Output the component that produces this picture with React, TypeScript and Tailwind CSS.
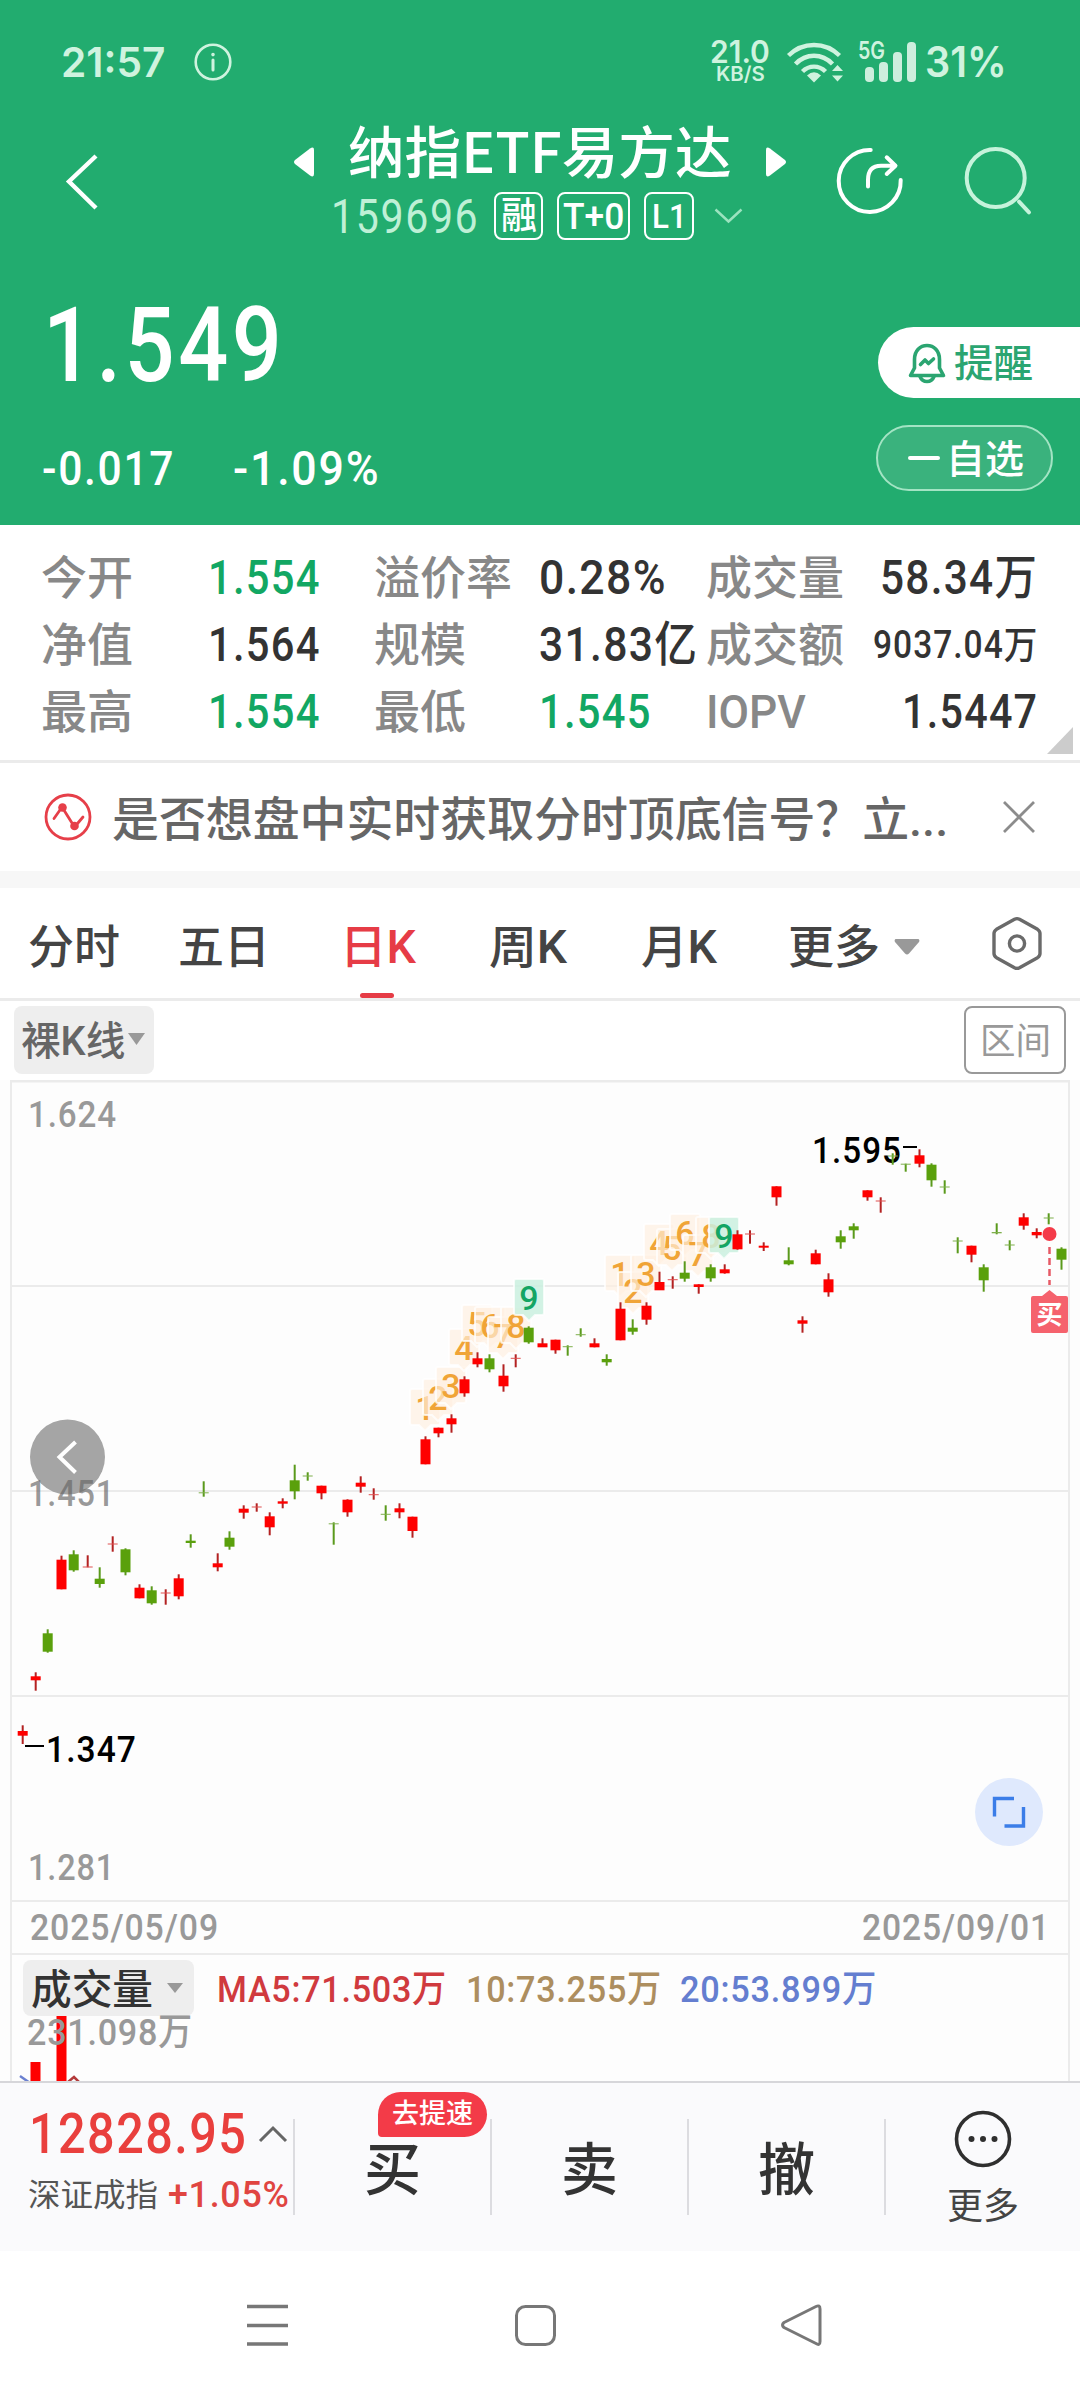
import { useLayoutEffect, useRef, useState, type ReactNode } from "react";

/* Text squeezed or stretched horizontally so that it fills a fixed width. */
function Fit({ w, className = "", children }: { w: number; className?: string; children: ReactNode }) {
  const ref = useRef<HTMLSpanElement>(null);
  const [scale, setScale] = useState(1);
  useLayoutEffect(() => {
    if (ref.current) setScale(w / ref.current.offsetWidth);
  }, [w]);
  return (
    <span className={`block shrink-0 leading-none ${className}`} style={{ width: w }}>
      <span ref={ref} className="inline-block origin-left whitespace-nowrap" style={{ transform: `scaleX(${scale})` }}>
        {children}
      </span>
    </span>
  );
}

function StatusBar() {
  return (
    <div className="flex h-[124px] items-center pl-[61px] font-['Inter','Noto_Sans_CJK_SC',sans-serif] font-semibold text-[#cff3df]">
      <Fit w={104} className="text-[41px]">21:57</Fit>
      <svg className="ml-7 shrink-0" width="40" height="40" viewBox="0 0 40 40" fill="none" stroke="#cff3df" strokeWidth="2.6" strokeLinecap="round">
        <circle cx="20" cy="20" r="17.3" />
        <path d="M20 18v10" strokeWidth="3" />
        <circle cx="20" cy="12.6" r="0.8" strokeWidth="2" />
      </svg>
      <div className="mb-1 ml-[477px] flex w-[60px] flex-col items-center">
        <Fit w={60} className="text-[31px]">21.0</Fit>
        <Fit w={49} className="-mt-[3px] text-[20px]">KB/S</Fit>
      </div>
      <svg className="ml-4 shrink-0" width="58" height="44" viewBox="0 0 58 44" fill="none" stroke="#cff3df" strokeWidth="4.4">
        <path d="M2.5 15.500C17 1.500 39 1.500 53.500 15.500M9.500 24C20 13 36 13 46.500 24M16.500 31.500C23 25 33 25 39.500 31.500" />
        <path d="M21 35.500Q28 29 35 35.500L28 42.500Z" fill="#cff3df" stroke="none" />
        <path d="M51.500 25L46 31H57ZM46 35.500H57L51.500 41.500Z" fill="#cff3df" stroke="none" />
      </svg>
      <div className="relative ml-[15px] flex h-10 w-[58px] shrink-0 items-end gap-[5px] pl-[6px]">
        <Fit w={27} className="absolute -top-[3px] -left-px text-[24px]">5G</Fit>
        <span className="h-[15px] w-[9px] rounded-sm bg-[#cdeedd]" />
        <span className="h-5 w-[9px] rounded-sm bg-[#cdeedd]" />
        <span className="h-[30px] w-[9px] rounded-sm bg-[#cdeedd]" />
        <span className="h-10 w-[9px] rounded-sm bg-[#cdeedd]" />
      </div>
      <Fit w={82} className="ml-[8px] text-[42px]">31%</Fit>
    </div>
  );
}

function TitleBar() {
  return (
    <div className="flex h-[126px] items-start">
      <svg className="mt-[27px] ml-[62px] shrink-0" width="40" height="60" viewBox="0 0 40 60" fill="none" stroke="white" strokeWidth="4.400">
        <path d="M34 5L7 30.500L34 57" />
      </svg>
      <div className="ml-[188px] w-[500px] shrink-0">
        <div className="flex h-[50px] items-start">
          <svg className="mt-[23px] ml-[3px] shrink-0" width="22" height="30" viewBox="0 0 22 30" fill="white">
            <path d="M17 1.500Q21 -1 21 3V27Q21 31 17 28.500L2 17Q0 15 2 13Z" />
          </svg>
          <Fit w={384} className="-mt-[3px] ml-[33px] font-['Noto_Sans_CJK_SC',sans-serif] text-[56px] font-medium leading-[50px] text-white">纳指ETF易方达</Fit>
          <svg className="mt-[23px] ml-[33px] shrink-0" width="22" height="30" viewBox="0 0 22 30" fill="white">
            <path d="M5 1.500Q1 -1 1 3V27Q1 31 5 28.500L20 17Q22 15 20 13Z" />
          </svg>
        </div>
        <div className="mt-[18px] flex h-12 items-center">
          <Fit w={148} className="mt-[2px] ml-[41px] text-[48px] font-normal tracking-[0.04em] text-[#bff0d6]">159696</Fit>
          <div className="ml-[15px] flex h-12 w-[49px] shrink-0 items-center justify-center rounded-lg border-2 border-white text-white">
            <Fit w={36} className="text-[37px] font-medium">融</Fit>
          </div>
          <div className="ml-[14px] flex h-12 w-[73px] shrink-0 items-center justify-center rounded-lg border-2 border-white text-white">
            <Fit w={61} className="mt-[2px] text-[36px] font-medium">T+0</Fit>
          </div>
          <div className="ml-[14px] flex h-12 w-[50px] shrink-0 items-center justify-center rounded-lg border-2 border-white text-white">
            <Fit w={35} className="text-[34px]">L1</Fit>
          </div>
          <svg className="ml-[20px] shrink-0" width="29" height="16" viewBox="0 0 29 16" fill="none" stroke="#9be3bf" strokeWidth="2.4">
            <path d="M1.500 1.500L14.500 13.500L27.500 1.500" />
          </svg>
        </div>
      </div>
      <svg className="mt-[21px] ml-[43px] shrink-0" width="72" height="72" viewBox="0 0 72 72" fill="none" stroke="white" strokeWidth="4" strokeLinecap="round" strokeLinejoin="round">
        <path d="M37.700 5A31 31 0 1 0 67.700 35" />
        <path d="M35 41.500V35Q35 20.700 48 20.700H62M53.700 12.300L62.500 20.700L53.700 29" />
      </svg>
      <svg className="mt-[21px] ml-[55px] shrink-0" width="72" height="72" viewBox="0 0 72 72" fill="none" stroke="#c6f3db" strokeWidth="4" strokeLinecap="round">
        <circle cx="35.700" cy="33" r="29" />
        <path d="M59 56.700L69 67.300" />
      </svg>
    </div>
  );
}

function PricePanel() {
  return (
    <div className="flex h-[275px] justify-between text-white">
      <div className="pt-[44px] pl-[43px]">
        <Fit w={242} className="text-[103px] font-medium leading-[108px] tracking-[0.04em]">1.549</Fit>
        <div className="mt-[48px] flex items-center text-[48px] font-medium leading-[48px] tracking-[0.04em]">
          <Fit w={133} className="-ml-px">-0.017</Fit>
          <Fit w={147} className="ml-[58px]">-1.09%</Fit>
        </div>
      </div>
      <div className="flex w-[204px] flex-col items-start pt-[77px]">
        <div className="ml-[2px] flex h-[71px] w-[202px] items-center rounded-l-full bg-white pl-[30px] text-[#2ba571]">
          <svg width="38" height="42" viewBox="0 0 38 42" fill="none" stroke="#2ba571" strokeWidth="3.600" strokeLinecap="round" strokeLinejoin="round">
            <path d="M6.500 26V17.500C6.500 9 12 3.500 19 3.500S31.500 9 31.500 17.500V26L35.500 33.500H2.500Z" />
            <path d="M12 34.500Q14 39.500 19 39.500T26 34.500" />
            <path d="M12.500 22.500L17 18L20.500 21.500L25.500 17" />
          </svg>
          <Fit w={79} className="mt-[4px] ml-[8px] text-[39px] font-medium">提醒</Fit>
        </div>
        <div className="mt-[27px] flex h-[66px] w-[177px] items-center rounded-full border-2 border-[#a3e4c4] bg-[#3ab27d] pl-[30px]">
          <span className="h-[4px] w-8 rounded-full bg-white" />
          <Fit w={78} className="mt-[4px] ml-[6px] text-[39px] font-medium">自选</Fit>
        </div>
      </div>
    </div>
  );
}

const GREEN = "text-[#12a763]";
const DARK = "text-[#333333]";

const STATS: { label: string; lw: number; value: string; vw: number; color: string; small?: boolean }[][] = [
  [
    { label: "今开", lw: 92, value: "1.554", vw: 113, color: GREEN },
    { label: "净值", lw: 92, value: "1.564", vw: 113, color: DARK },
    { label: "最高", lw: 92, value: "1.554", vw: 113, color: GREEN },
  ],
  [
    { label: "溢价率", lw: 138, value: "0.28%", vw: 128, color: DARK },
    { label: "规模", lw: 92, value: "31.83亿", vw: 159, color: DARK },
    { label: "最低", lw: 92, value: "1.545", vw: 113, color: GREEN },
  ],
  [
    { label: "成交量", lw: 138, value: "58.34万", vw: 158, color: DARK },
    { label: "成交额", lw: 138, value: "9037.04万", vw: 165, color: DARK, small: true },
    { label: "IOPV", lw: 100, value: "1.5447", vw: 136, color: DARK },
  ],
];

function Stats() {
  return (
    <div className="relative flex h-[238px] border-b-[3px] border-[#ebebeb] bg-white pt-[19px]">
      {STATS.map((col, i) => (
        <div key={i} className={i === 0 ? "ml-[41px] w-[280px]" : i === 1 ? "ml-[53px] w-[324px]" : "ml-[8px] w-[332px]"}>
          {col.map((s) => (
            <div key={s.label} className="flex h-[67px] items-center">
              <div className={i === 1 ? "w-[165px] shrink-0" : ""}>
                <Fit w={s.lw} className="text-[46px] text-[#888888]">{s.label}</Fit>
              </div>
              <div className={i === 1 ? "" : "ml-auto"}>
                <Fit w={s.vw} className={`tracking-[0.03em] ${s.small ? "text-[38px]" : "text-[48px]"} ${s.color}`}>{s.value}</Fit>
              </div>
            </div>
          ))}
        </div>
      ))}
      <svg className="absolute right-[7px] bottom-[6px]" width="26" height="27" viewBox="0 0 26 27" fill="#cccccc">
        <path d="M26 0V27H0Z" />
      </svg>
    </div>
  );
}

function Notice() {
  return (
    <div className="flex h-[108px] items-center bg-white pl-[44px] text-[#666666]">
      <svg className="shrink-0" width="48" height="48" viewBox="0 0 48 48" fill="none" stroke="#e63f49" strokeWidth="2.800" strokeLinecap="round">
        <circle cx="24" cy="24" r="22" />
        <circle cx="18.500" cy="14.500" r="4.300" fill="#e63f49" stroke="none" />
        <circle cx="30.500" cy="33" r="4.300" fill="#e63f49" stroke="none" />
        <path d="M10 25.500L16 17M20.500 18L28 30M33.500 30.500L39 24" />
      </svg>
      <Fit w={836} className="mt-[5px] ml-[20px] text-[47px] leading-[54px]">是否想盘中实时获取分时顶底信号？立...</Fit>
      <svg className="ml-[54px] shrink-0" width="34" height="34" viewBox="0 0 34 34" stroke="#8c8c8c" strokeWidth="2.800">
        <path d="M2 2L32 32M32 2L2 32" />
      </svg>
    </div>
  );
}

function Tabs() {
  return (
    <div className="flex h-[113px] items-center border-b-[3px] border-[#ebebeb] bg-white pt-2 pl-[28px] text-[46px] text-[#444444]">
      <Fit w={92}>分时</Fit>
      <Fit w={92} className="ml-[58px]">五日</Fit>
      <div className="relative ml-[70px] flex h-full w-[80px] items-center text-[#e63c46]">
        <Fit w={76}>日K</Fit>
        <span className="absolute bottom-0 left-[20px] h-[5px] w-[34px] rounded-full bg-[#e63c46]" />
      </div>
      <Fit w={78} className="ml-[69px]">周K</Fit>
      <Fit w={76} className="ml-[74px]">月K</Fit>
      <Fit w={92} className="ml-[71px]">更多</Fit>
      <svg className="ml-[14px] shrink-0" width="26" height="16" viewBox="0 0 26 16" fill="#999999">
        <path d="M1.500 0H24.500Q26 1 25 3L15 14.500Q13 16.500 11 14.500L1 3Q0 1 1.500 0Z" />
      </svg>
      <svg className="-mt-[7px] ml-[71px] shrink-0" width="52" height="56" viewBox="0 0 52 56" fill="none" stroke="#6a6a6a" strokeWidth="3.400" strokeLinejoin="round">
        <path d="M23.500 3.300Q26 2 28.500 3.300L46.500 13.300Q49 15 49 17.500V37.500Q49 40 46.500 41.700L28.500 51.700Q26 53 23.500 51.700L5.500 41.700Q3 40 3 37.500V17.500Q3 15 5.500 13.300Z" />
        <circle cx="26" cy="27.500" r="7.600" />
      </svg>
    </div>
  );
}

function ChartTools() {
  return (
    <div className="flex h-[79px] items-start justify-between bg-white pt-[5px] pr-[14px] pl-[14px]">
      <div className="flex h-[68px] w-[140px] items-center rounded-lg bg-[#eeeeee] pl-[7px] text-[#666666]">
        <Fit w={104} className="mt-[3px] text-[40px]">裸K线</Fit>
        <svg className="-mt-[3px] ml-[3px] shrink-0" width="17" height="12" viewBox="0 0 17 12" fill="#999999">
          <path d="M0 0H17L8.500 12Z" />
        </svg>
      </div>
      <div className="flex h-[68px] w-[102px] items-center justify-center rounded-lg border-2 border-[#999999] text-[#999999]">
        <Fit w={71} className="mt-[4px] text-[36px] font-normal">区间</Fit>
      </div>
    </div>
  );
}

/* One entry per trading day: centre x, high, low, body top, body bottom, rising (1) or falling (0). */
const CANDLES: [number, number, number, number, number, 0 | 1][] = [
  [22.7, 1725.3, 1744, 1731, 1735.7, 1], [35.7, 1672.3, 1690.7, 1676.3, 1680.3, 1], [47.700, 1629.3, 1652.7, 1633.3, 1651.7, 0],
  [61.500, 1555.7, 1589.3, 1559.7, 1589.3, 1], [73.700, 1550.3, 1571.7, 1554.3, 1570.3, 0], [87.700, 1555.3, 1567.3, 1566.500, 1567.500, 1],
  [99.700, 1567.3, 1587.7, 1578.7, 1584, 0], [112.700, 1536.3, 1551.7, 1543.500, 1544.500, 1], [125.500, 1548.3, 1575.3, 1549.3, 1572.3, 0],
  [139.500, 1584.3, 1598.3, 1587.7, 1598.3, 1], [151.700, 1586.3, 1604.7, 1590.3, 1603.3, 0], [165.700, 1589.3, 1604.7, 1592.500, 1593.500, 1],
  [178.700, 1574.3, 1599.3, 1578.3, 1596.3, 1], [190.700, 1534.3, 1547.7, 1540.7, 1543, 0], [203.700, 1481.3, 1496.7, 1492.3, 1493.3, 0],
  [217.700, 1553.3, 1571.3, 1563.3, 1567.3, 1], [229.500, 1531.3, 1549.7, 1537.7, 1546.7, 0], [243.700, 1505.3, 1518.7, 1508.7, 1512.7, 1],
  [256.700, 1503.3, 1511.7, 1506.500, 1507.500, 1], [269.700, 1512.3, 1535.3, 1516.3, 1527.3, 1], [282.700, 1498.3, 1508.3, 1501.3, 1503.7, 1],
  [294.700, 1464.7, 1499.3, 1480.3, 1491.3, 0], [307.700, 1472.3, 1480.7, 1475.500, 1476.500, 0], [321.500, 1485.7, 1499.3, 1485.7, 1493.3, 1],
  [333.700, 1522.3, 1544.7, 1523.3, 1524.3, 0], [347.500, 1499.3, 1516.7, 1499.7, 1512.3, 1], [360.700, 1476.3, 1492.7, 1482.7, 1486.7, 1],
  [373.700, 1488.3, 1499.7, 1494.2, 1495.2, 1], [385.700, 1505.3, 1520.7, 1513.8, 1514.8, 0], [399.500, 1503.3, 1518.3, 1508.3, 1512.3, 1],
  [412.500, 1516.7, 1537.7, 1516.7, 1531, 1], [425.500, 1436.3, 1464.3, 1439.3, 1464.3, 1], [438.500, 1427.7, 1437.3, 1427.7, 1433.3, 1],
  [451.500, 1414.3, 1432.7, 1418.3, 1424.3, 1], [464.500, 1376.3, 1396.7, 1379.3, 1393.3, 1], [477.500, 1352.3, 1367.3, 1358.3, 1364.3, 1],
  [489.500, 1354.3, 1372.3, 1358.3, 1369.3, 0], [503.500, 1364.3, 1391.7, 1375.7, 1386.3, 1], [515.700, 1354.3, 1367.3, 1357.8, 1358.8, 1],
  [528.700, 1326.3, 1343.7, 1327.7, 1342.3, 0], [542.500, 1338.3, 1347, 1343.3, 1347.3, 1], [555.500, 1339.7, 1353.7, 1339.7, 1350.3, 1],
  [567.700, 1345.3, 1355.7, 1346.2, 1347.2, 0], [580.700, 1328.3, 1336.7, 1334.2, 1335.2, 0], [594.500, 1338.3, 1347.3, 1343.3, 1347.3, 1],
  [606.700, 1354.3, 1365.7, 1359, 1362.3, 0], [620.500, 1302.3, 1340.3, 1308.7, 1340.3, 1], [632.700, 1319.3, 1334.7, 1327.7, 1331.7, 0],
  [646.500, 1302.3, 1324.7, 1305.7, 1319.7, 1], [659.500, 1271.7, 1290, 1282, 1290.3, 1], [672.700, 1276.3, 1288.7, 1279.2, 1280.2, 1],
  [684.700, 1261.3, 1281.7, 1272.7, 1278.7, 0], [698.700, 1284.3, 1293.7, 1284.3, 1287, 1], [710.700, 1264.3, 1281.7, 1267.3, 1278.3, 0],
  [724.700, 1264.3, 1273.7, 1269.3, 1273.3, 1], [737.500, 1230.3, 1249.7, 1234.3, 1249.3, 1], [750, 1230.3, 1243.7, 1233.500, 1234.500, 1],
  [763.700, 1242.3, 1251, 1245.7, 1247.7, 1], [776.500, 1186.3, 1205.7, 1186.3, 1197.3, 1], [788.700, 1247.3, 1265.3, 1260.3, 1264.3, 0],
  [802.500, 1316.3, 1332.7, 1320.3, 1323.7, 1], [815.700, 1249.7, 1264.3, 1253.3, 1264.3, 1], [828.500, 1273.3, 1296.7, 1279.3, 1292.3, 1],
  [840.700, 1230.3, 1248.7, 1236.3, 1242.3, 0], [853.700, 1223.3, 1238.7, 1226.3, 1230.3, 0], [867.500, 1190.3, 1200.7, 1190.3, 1197.3, 1],
  [880.700, 1197.3, 1212.7, 1200.500, 1201.500, 1], [892.700, 1153.3, 1164.7, 1155.500, 1156.500, 0], [905.700, 1163.7, 1171.7, 1163.700, 1164.700, 0],
  [919.500, 1149.3, 1167.3, 1155.3, 1163.7, 1], [931.500, 1163.3, 1186.7, 1164.7, 1180.3, 0], [944.700, 1180.3, 1193.7, 1186.500, 1187.500, 0],
  [957.700, 1237.3, 1253.3, 1240.500, 1241.500, 0], [971.500, 1245.7, 1262.3, 1245.7, 1254.7, 1], [983.700, 1264.3, 1291.7, 1267.3, 1280.3, 0],
  [996.700, 1223.3, 1234.3, 1232, 1233.3, 0], [1009.700, 1240.3, 1250.3, 1244.500, 1245.500, 0], [1023.700, 1213.3, 1229.7, 1217.3, 1225.7, 1],
  [1036.700, 1228.3, 1238.3, 1232, 1235.3, 1], [1048.700, 1213.3, 1224.3, 1217.500, 1218.500, 0], [1061.500, 1247.3, 1269.7, 1248.7, 1259.7, 0],
];

/* Sequence markers: count, centre x, top. */
const COUNTS: [string, number, number][] = [
  ["1", 425, 1389], ["2", 438, 1379], ["3", 451, 1367], ["4", 464, 1329], ["5", 477, 1305], ["6", 490, 1307], ["7", 503, 1317], ["8", 516, 1307], ["9", 529, 1279],
  ["1", 620, 1255], ["2", 633, 1272], ["3", 646, 1255], ["4", 659, 1224], ["5", 672, 1229], ["6", 685, 1214], ["7", 698, 1235], ["8", 711, 1217], ["9", 724, 1217],
];

function PriceChart() {
  const base = 1080;
  return (
    <svg className="block shrink-0 font-['Roboto','Noto_Sans_CJK_SC',sans-serif]" width="1080" height="1001" viewBox={`0 ${base} 1080 1001`}>
      <g stroke="#ebebeb" strokeWidth="2">
        <path d="M10 1081H1070" strokeWidth="3" />
        <path d="M11 1286H1069M11 1491H1069M11 1696H1069M11 1901H1069M11 1954H1069" />
        <path d="M11 1080V2081M1069 1080V2081" />
      </g>
      {COUNTS.map(([n, x, y], i) => (
        <g key={i}>
          <path
            d={`M${x - 13} ${y}H${x + 13}Q${x + 15} ${y} ${x + 15} ${y + 2}V${y + 34}Q${x + 15} ${y + 36} ${x + 13} ${y + 36}H${x + 6}L${x} ${y + 42}L${x - 6} ${y + 36}H${x - 13}Q${x - 15} ${y + 36} ${x - 15} ${y + 34}V${y + 2}Q${x - 15} ${y} ${x - 13} ${y}Z`}
            fill={n === "9" ? "#caf0df" : "#fff0e1"}
            fillOpacity={n === "9" ? 0.85 : 0.66}
            stroke="#ffffff"
            strokeOpacity="0.75"
            strokeWidth="2"
          />
          <text x={x} y={y + 30.500} textAnchor="middle" fontSize="34" fontWeight="500" fill={n === "9" ? "#14a563" : "#f0a437"}>{n}</text>
        </g>
      ))}
      <g fontSize="37.500" fontWeight="500" letterSpacing="1.200">
        <text x="812" y="1163" textLength="90" lengthAdjust="spacingAndGlyphs">1.595</text>
        <text x="46" y="1762" textLength="91" lengthAdjust="spacingAndGlyphs">1.347</text>
      </g>
      <path d="M903 1147H917M25 1746H44" stroke="#000000" strokeWidth="2" />
      {CANDLES.map(([x, high, low, top, bottom, up], i) => (
        <g key={i}>
          <rect x={x - 1} y={high} width="2" height={low - high} fill={up ? "#b32222" : "#5a9a1c"} />
          <rect x={x - 5} y={top} width="10" height={bottom - top} fill={up ? (bottom - top < 2 ? "#e05050" : "#fe0000") : bottom - top < 2 ? "#7fb04d" : "#5aa00c"} />
        </g>
      ))}
      <circle cx="1049.500" cy="1234" r="7" fill="#f43b49" />
      <path d="M1049.500 1247V1285" stroke="#e65a66" strokeWidth="2.500" strokeDasharray="7 4" />
      <path d="M1033 1296H1042L1049.500 1290L1057 1296H1066Q1068 1296 1068 1298V1331Q1068 1333 1066 1333H1033Q1031 1333 1031 1331V1298Q1031 1296 1033 1296Z" fill="#f5626d" />
      <text x="1049.500" y="1324" textAnchor="middle" fontSize="26" fontWeight="700" fill="#ffffff">买</text>
      <circle cx="67.500" cy="1457" r="37.500" fill="#a5a5a5" />
      <path d="M75.500 1442L59.500 1457L75.500 1472.500" fill="none" stroke="#ffffff" strokeWidth="4" />
      <g fontSize="37.500" fill="#999999" letterSpacing="1">
        <text x="28" y="1127" textLength="89" lengthAdjust="spacingAndGlyphs">1.624</text>
        <text x="28" y="1505.500" textLength="87" lengthAdjust="spacingAndGlyphs" fill="#666666" fillOpacity="0.660">1.451</text>
        <text x="28" y="1880" textLength="87" lengthAdjust="spacingAndGlyphs">1.281</text>
        <text x="30" y="1940" textLength="189" lengthAdjust="spacingAndGlyphs">2025/05/09</text>
        <text x="862" y="1940" textLength="188" lengthAdjust="spacingAndGlyphs">2025/09/01</text>
      </g>
      <circle cx="1009" cy="1812" r="34" fill="#dfe9fd" />
      <path d="M1014 1798.500H994.500V1816.500M1004.500 1826H1023.500V1807" fill="none" stroke="#3b7de8" strokeWidth="3.400" />

      <path d="M30.500 2062H40.500V2081H30.500ZM56.500 2016H66.500V2081H56.500Z" fill="#fe0000" />
      <path d="M20 2076L30 2083" stroke="#6b80d0" strokeWidth="2.500" />
      <path d="M68 2082L74 2077L80 2083" fill="none" stroke="#b33a3a" strokeWidth="2.500" />
      <rect x="23" y="1960" width="171" height="56" rx="8" fill="#eeeeee" />
      <text x="31" y="2003.500" fontSize="41" fontWeight="500" textLength="122" lengthAdjust="spacingAndGlyphs" fill="#333333">成交量</text>
      <path d="M167 1983H183L175 1993Z" fill="#999999" />
      <g fontSize="37" fontWeight="500" letterSpacing="0.800">
        <text x="217" y="2001.500" textLength="230" lengthAdjust="spacingAndGlyphs" fill="#d03a3e">MA5:71.503万</text>
        <text x="466" y="2001.500" textLength="196" lengthAdjust="spacingAndGlyphs" fill="#ad8e5f">10:73.255万</text>
        <text x="680" y="2001.500" textLength="197" lengthAdjust="spacingAndGlyphs" fill="#647ed0">20:53.899万</text>
      </g>
      <text x="27" y="2045" fontSize="37" letterSpacing="0.800" textLength="166" lengthAdjust="spacingAndGlyphs" fill="#999999">231.098万</text>
    </svg>
  );
}

function TradeBar() {
  return (
    <div className="flex h-[170px] shrink-0 items-start border-t-2 border-[#d6d6da] bg-[#fafafc]">
      <div className="w-[293px] shrink-0 pt-[21px] pl-[28px]">
        <div className="flex h-[60px] items-center text-[#e93f3d]">
          <Fit w={218} className="ml-px text-[55px] tracking-[0.03em]">12828.95</Fit>
          <svg className="ml-[11px] shrink-0" width="30" height="18" viewBox="0 0 30 18" fill="none" stroke="#666666" strokeWidth="3">
            <path d="M2 16L15 3L28 16" />
          </svg>
        </div>
        <div className="mt-[8px] flex h-[44px] items-center">
          <Fit w={130} className="mt-[2px] text-[32px] font-normal text-[#555555]">深证成指</Fit>
          <Fit w={122} className="ml-[10px] text-[37px] tracking-[0.02em] text-[#e04541]">+1.05%</Fit>
        </div>
      </div>
      <div className="mt-[36px] flex h-[96px] flex-1">
        {["买", "卖", "撤"].map((t) => (
          <div key={t} className="relative flex w-[197px] items-center justify-center border-l-2 border-[#dcdce0] pt-[7px] text-[57px] font-medium leading-none text-[#333333]">
            {t}
            {t === "买" && (
              <span className="absolute -top-[27px] left-[83px] flex h-[45px] w-[109px] items-center justify-center rounded-[23px] rounded-bl-[4px] bg-[#f33b48] text-white">
                <Fit w={81} className="text-[27px] font-medium">去提速</Fit>
              </span>
            )}
          </div>
        ))}
        <div className="flex flex-1 flex-col items-center border-l-2 border-[#dcdce0]">
          <svg className="-mt-[9px] shrink-0" width="58" height="58" viewBox="0 0 58 58" fill="#2f2f2f">
            <circle cx="29" cy="29" r="26.500" fill="none" stroke="#2f2f2f" strokeWidth="3.600" />
            <circle cx="17.500" cy="29" r="3" />
            <circle cx="29" cy="29" r="3" />
            <circle cx="40.500" cy="29" r="3" />
          </svg>
          <Fit w={72} className="mt-[21px] text-[36px] font-normal text-[#444444]">更多</Fit>
        </div>
      </div>
    </div>
  );
}

function SystemNav() {
  return (
    <div className="flex h-[149px] shrink-0 items-start bg-white pt-[52px]">
      <svg className="ml-[245px] shrink-0" width="45" height="44" viewBox="0 0 45 44" stroke="#777777" strokeWidth="3.400">
        <path d="M2 3.500H43M2 22.500H43M2 41H43" />
      </svg>
      <svg className="ml-[223px] shrink-0" width="45" height="45" viewBox="0 0 45 45" fill="none" stroke="#777777" strokeWidth="3">
        <rect x="3.500" y="3.500" width="38" height="38" rx="9" />
      </svg>
      <svg className="ml-[221px] shrink-0" width="45" height="44" viewBox="0 0 45 44" fill="none" stroke="#777777" strokeWidth="3" strokeLinejoin="round">
        <path d="M37 3.500Q41 1.500 41 6V38.500Q41 43 37 40.500L5 24.500Q2 22 5 19.500Z" />
      </svg>
    </div>
  );
}

export default function App() {
  return (
    <div className="flex h-[2400px] w-[1080px] flex-col overflow-hidden bg-[#fdfdfd] font-['Roboto','Noto_Sans_CJK_SC',sans-serif] font-medium">
      <header className="h-[525px] shrink-0 bg-[#22ac6f]">
        <StatusBar />
        <TitleBar />
        <PricePanel />
      </header>
      <Stats />
      <Notice />
      <div className="h-[17px] shrink-0 bg-[#f7f7f7]" />
      <Tabs />
      <ChartTools />
      <PriceChart />
      <TradeBar />
      <SystemNav />
    </div>
  );
}
